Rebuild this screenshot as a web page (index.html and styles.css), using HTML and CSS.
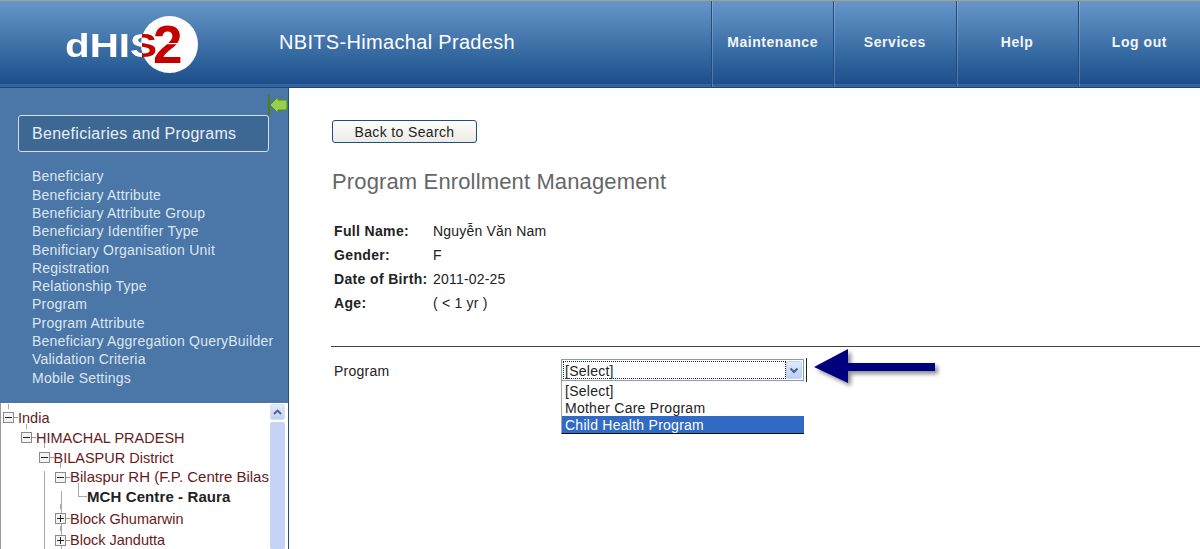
FILE: index.html
```html
<!DOCTYPE html>
<html lang="en">
<head>
<meta charset="utf-8">
<title>Program Enrollment Management</title>
<link rel="stylesheet" href="styles.css">
</head>
<body>
<header class="header">
  <div class="logo-cell">
    <svg class="logo" width="136" height="62" viewBox="0 0 136 62">
      <defs>
        <linearGradient id="dhisFill" gradientUnits="userSpaceOnUse" x1="0" y1="0" x2="136" y2="0">
          <stop offset="0.566" stop-color="#fff"/>
          <stop offset="0.566" stop-color="#c40000"/>
        </linearGradient>
        <filter id="soft" x="-5%" y="-5%" width="110%" height="110%"><feGaussianBlur stdDeviation="0.45"/></filter>
      </defs>
      <circle cx="104.5" cy="29.5" r="28.5" fill="#fff"/>
      <text class="logo-dhis" x="0" y="42" textLength="92" lengthAdjust="spacingAndGlyphs" fill="url(#dhisFill)" filter="url(#soft)">dHIS</text>
      <text class="logo-two" x="88" y="48">2</text>
      <rect x="88" y="28" width="30" height="1.2" fill="#fff"/>
    </svg>
  </div>
  <div class="app-title">NBITS-Himachal Pradesh</div>
  <nav class="nav">
    <a class="nav-item">Maintenance</a>
    <a class="nav-item">Services</a>
    <a class="nav-item">Help</a>
    <a class="nav-item">Log out</a>
  </nav>
</header>
<div class="main">
  <aside class="sidebar">
    <svg class="collapse" width="20" height="20" viewBox="0 0 20 20">
      <rect x="0" y="0" width="2" height="20" fill="#4c7f1c"/>
      <path d="M2 10 L10 2 V5 H19 V15 H10 V18 Z" fill="#98d04e" stroke="#4f8a22" stroke-width="1"/>
    </svg>
    <div class="section-box">Beneficiaries and Programs</div>
    <ul class="menu">
      <li>Beneficiary</li>
      <li>Beneficiary Attribute</li>
      <li>Beneficiary Attribute Group</li>
      <li>Beneficiary Identifier Type</li>
      <li>Benificiary Organisation Unit</li>
      <li>Registration</li>
      <li>Relationship Type</li>
      <li>Program</li>
      <li>Program Attribute</li>
      <li>Beneficiary Aggregation QueryBuilder</li>
      <li>Validation Criteria</li>
      <li>Mobile Settings</li>
    </ul>
    <div class="tree-panel">
      <div class="tree">
        <div class="node l0"><span class="box minus"></span><span class="dash"></span>India</div>
        <div class="node l1"><span class="box minus"></span><span class="dash"></span>HIMACHAL PRADESH</div>
        <div class="node l2"><span class="box minus"></span><span class="dash"></span>BILASPUR District</div>
        <div class="node l3"><span class="box minus"></span><span class="dash"></span><span class="wide">Bilaspur RH (F.P. Centre Bilas</span></div>
        <div class="node l4 current"><span class="elbow"></span>MCH Centre - Raura</div>
        <div class="node l3 tall first"><span class="box plus"></span><span class="dash"></span>Block Ghumarwin</div>
        <div class="node l3 tall"><span class="box plus"></span><span class="dash"></span>Block Jandutta</div>
      </div>
      <div class="scrollbar">
        <div class="scroll-btn">
          <svg width="9" height="6" viewBox="0 0 9 6"><path d="M1 5 L4.5 1.5 L8 5" fill="none" stroke="#4d6185" stroke-width="1.8"/></svg>
        </div>
        <div class="scroll-thumb"></div>
      </div>
    </div>
  </aside>
  <main class="content">
    <button class="back-btn" type="button">Back to Search</button>
    <h1 class="page-title">Program Enrollment Management</h1>
    <dl class="details">
      <dt>Full Name:</dt><dd>Nguyễn Văn Nam</dd>
      <dt>Gender:</dt><dd>F</dd>
      <dt>Date of Birth:</dt><dd>2011-02-25</dd>
      <dt>Age:</dt><dd>( &lt; 1 yr )</dd>
    </dl>
    <div class="program-row">
      <span class="program-label">Program</span>
      <div class="select-wrap">
        <div class="select">
          <span class="select-value">[Select]</span>
          <span class="select-btn">
            <svg width="10" height="7" viewBox="0 0 10 7"><path d="M1.5 1.5 L5 5 L8.5 1.5" fill="none" stroke="#4d6185" stroke-width="2"/></svg>
          </span>
        </div>
        <span class="caret"></span>
        <ul class="options">
          <li>[Select]</li>
          <li>Mother Care Program</li>
          <li class="selected">Child Health Program</li>
        </ul>
        <svg class="arrow" width="128" height="44" viewBox="0 0 128 44">
          <defs><filter id="sh" x="-10%" y="-20%" width="130%" height="150%"><feDropShadow dx="3" dy="3" stdDeviation="2" flood-color="#000" flood-opacity=".45"/></filter></defs>
          <path d="M1 20 L35 2 V16 H122 V24 H35 V36 Z" fill="#00007f" filter="url(#sh)"/>
        </svg>
      </div>
    </div>
  </main>
</div>
</body>
</html>
```
FILE: styles.css
```css
* { box-sizing: border-box; }
html, body { margin: 0; height: 100%; overflow: hidden; }
body {
  font-family: "Liberation Sans", Arial, sans-serif;
  font-size: 14px;
  color: #222;
  background: #fff;
  display: flex;
  flex-direction: column;
}
.header {
  height: 88px;
  flex: none;
  display: flex;
  align-items: stretch;
  border-top: 1px solid #a89f8f;
  border-bottom: 1px solid #1b4777;
  background: linear-gradient(#6797c9 0, #5384b8 25%, #2f639c 70%, #1e4f8a 96%, #34649c 97%, #34649c 100%);
}
.logo-cell { width: 279px; flex: none; padding: 14px 0 0 65px; }
.logo { display: block; }
.logo-dhis { font: bold 33px "Liberation Sans", sans-serif; }
.logo-two { font: bold 53px "Liberation Sans", sans-serif; fill: #c40000; }
.app-title {
  flex: 1;
  font-size: 20px;
  letter-spacing: .32px;
  color: #fff;
  padding-top: 30px;
  line-height: 23px;
}
.nav { display: flex; flex: none; }
.nav-item {
  width: 122.25px;
  border-left: 1px solid #1f4d80;
  box-shadow: inset 1px 0 0 rgba(255,255,255,.2);
  color: #f2f5f9;
  font-weight: bold;
  font-size: 14px;
  letter-spacing: .55px;
  text-align: center;
  padding-top: 33px;
  line-height: 16px;
}
.main { flex: 1; display: flex; min-height: 0; }
.sidebar {
  position: relative;
  width: 289px;
  flex: none;
  background: #4a76a8;
  border-right: 1px solid #234e7f;
  display: flex;
  flex-direction: column;
  padding-top: 27px;
}
.collapse { position: absolute; left: 268px; top: 7px; }
.section-box {
  margin-left: 18px;
  width: 251px;
  height: 37px;
  border: 1px solid #d4dfeb;
  border-radius: 3px;
  background: #3d6893;
  color: #e9eff6;
  font-size: 16px;
  letter-spacing: .3px;
  line-height: 35px;
  padding-left: 13px;
  flex: none;
}
.menu {
  list-style: none;
  margin: 0;
  padding: 15.4px 0 0 32px;
  color: #dde6f0;
  letter-spacing: .22px;
  flex: none;
}
.menu li { height: 18.3px; line-height: 19px; white-space: nowrap; }
.tree-panel {
  margin-top: 15.6px;
  flex: 1;
  background: #fff;
  display: flex;
  min-height: 0;
  overflow: hidden;
  box-shadow: inset 1px 0 0 #9a9a9a;
}
.tree {
  flex: 1;
  min-width: 0;
  overflow: hidden;
  padding-top: 5.5px;
  color: #691a1a;
  font-size: 14.5px;
  white-space: nowrap;
  background:
    linear-gradient(#aaa,#aaa) 44px 68px / 1px 100% no-repeat,
    linear-gradient(#aaa,#aaa) 61px 88px / 1px 100% no-repeat;
}
.wide { font-size: 15px; }
.node {
  position: relative;
  height: 19.7px;
  line-height: 20px;
  display: flex;
  align-items: center;
}
.node.l2 { height: 20px; padding-top: 1px; }
.node.tall { height: 21.5px; }
.node.tall.first { margin-top: 1.3px; }
.node.l0 { padding-left: 3px; }
.node.l1 { padding-left: 21px; }
.node.l2 { padding-left: 38.5px; }
.node.l3 { padding-left: 55px; }
.box {
  width: 11px;
  height: 11px;
  border: 1px solid #8a8a8a;
  background: linear-gradient(#222,#222) center / 7px 1px no-repeat, #f4f4f4;
  flex: none;
}
.box.plus { background: linear-gradient(#222,#222) center / 7px 1px no-repeat, linear-gradient(#222,#222) center / 1px 7px no-repeat, #f4f4f4; }
.dash { width: 4px; height: 1px; background: #999; flex: none; }
.elbow {
  position: absolute;
  left: 78px;
  top: -4px;
  width: 9px;
  height: 14px;
  border-left: 1px solid #aaa;
  border-bottom: 1px solid #aaa;
}
.node.current { font-weight: bold; font-size: 15px; color: #222; padding-left: 87px; letter-spacing: .1px; }
.node::before {
  content: "";
  position: absolute;
  top: -4px;
  height: 5px;
  width: 1px;
  background: #aaa;
}
.node.l0::before { left: 8px; }
.node.l1::before { left: 26px; }
.node.l2::before { left: 44px; }
.node.l3::before { left: 60px; }
.node.current::before { display: none; }
.scrollbar { width: 18px; flex: none; padding: 1px 3px 0 0; display: flex; flex-direction: column; gap: 2px; background: #fff; }
.scroll-btn {
  height: 16px;
  border-radius: 2px;
  background: linear-gradient(#e3ebfb,#bccff3);
  border: 1px solid #d8e2f6;
  display: flex;
  align-items: center;
  justify-content: center;
}
.scroll-thumb { flex: 1; background: #c3d4f6; border-radius: 2px; }
.content { flex: 1; min-width: 0; padding: 32px 0 0 0; }
.back-btn {
  display: block;
  margin-left: 43px;
  width: 145px;
  height: 23px;
  padding: 0;
  border: 1px solid #1c4f80;
  border-radius: 3px;
  background: linear-gradient(#fdfdfb,#ecebe5);
  font: 14px "Liberation Sans", sans-serif;
  letter-spacing: .36px;
  color: #222;
}
.page-title {
  margin: 25px 0 0 43px;
  font-size: 22px;
  letter-spacing: .14px;
  line-height: 28px;
  font-weight: normal;
  color: #666;
}
.details {
  margin: 23px 0 0 45px;
  display: grid;
  grid-template-columns: 99px 1fr;
  grid-auto-rows: 24px;
  line-height: 24px;
  letter-spacing: .2px;
}
.details dt { font-weight: bold; letter-spacing: .35px; white-space: nowrap; }
.details dd { margin: 0; }
.program-row {
  margin: 31px 0 0 42px;
  border-top: 1px solid #444;
  padding: 12px 0 0 3px;
  display: flex;
  height: 60px;
  letter-spacing: .26px;
}
.program-label { width: 227px; line-height: 24px; flex: none; }
.select-wrap { position: relative; width: 246px; height: 22px; }
.select {
  width: 243px;
  height: 22px;
  border: 1px solid #7f9db9;
  display: flex;
  align-items: stretch;
  padding: 1px;
  background: #fff;
}
.select-value {
  flex: 1;
  border: 1px dotted #222;
  line-height: 18px;
  padding-left: 1px;
}
.select-btn {
  width: 16px;
  background: linear-gradient(#e1eafe,#bccff7);
  border: 1px solid #c3d2f3;
  border-radius: 2px;
  display: flex;
  align-items: center;
  justify-content: center;
}
.caret {
  position: absolute;
  left: 245px;
  top: -1px;
  width: 1px;
  height: 24px;
  background: #222;
}
.options {
  position: absolute;
  left: 0;
  top: 22px;
  width: 243px;
  height: 53px;
  margin: 0;
  padding: 1px 0 0;
  list-style: none;
  background: #fff;
  border-left: 1px solid #a9a9a9;
  border-bottom: 1px solid #111;
}
.options li { height: 17px; line-height: 18px; padding-left: 3px; }
.options .selected { background: #316ac5; color: #fff; }
.arrow { position: absolute; left: 252px; top: -12px; }
```
